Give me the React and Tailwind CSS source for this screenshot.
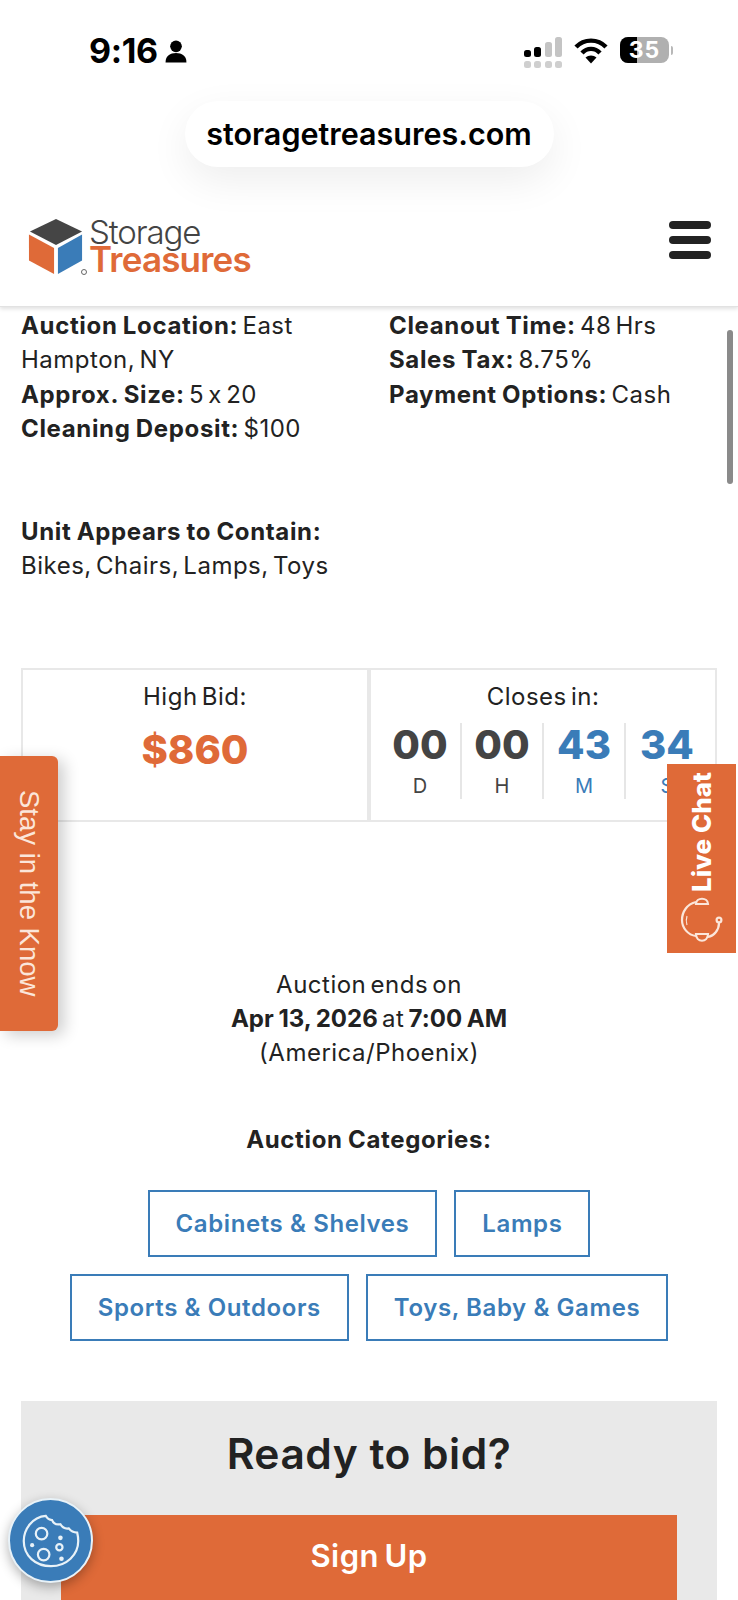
import React from 'react';

const font = { fontFamily: 'Inter, "Noto Sans", sans-serif', fontFeatureSettings: '"calt" 0' };

function SignalIcon() {
  return (
    <svg width="38" height="31" viewBox="0 0 38 31">
      <rect x="0" y="13" width="7" height="7" rx="2.5" fill="#000" />
      <rect x="10" y="10" width="7" height="10" rx="2.5" fill="#000" />
      <rect x="21" y="5" width="7" height="15" rx="2.5" fill="#c4c4c4" />
      <rect x="31" y="0" width="7" height="20" rx="2.5" fill="#c4c4c4" />
      <rect x="0" y="24" width="7" height="7" rx="2.5" fill="#cfcfcf" />
      <rect x="10" y="24" width="7" height="7" rx="2.5" fill="#cfcfcf" />
      <rect x="21" y="24" width="7" height="7" rx="2.5" fill="#cfcfcf" />
      <rect x="31" y="24" width="7" height="7" rx="2.5" fill="#cfcfcf" />
    </svg>
  );
}

function WifiIcon() {
  return (
    <svg width="34" height="27" viewBox="0 0 34 27" fill="none" stroke="#000" strokeWidth="4.4">
      <path d="M2 10 C10 1.5 24 1.5 32 10" />
      <path d="M8 16 C13 10.5 21 10.5 26 16" />
      <path d="M17 26.5 L11.5 20.5 C14.5 17.8 19.5 17.8 22.5 20.5 Z" fill="#000" stroke="none" />
    </svg>
  );
}

function Battery() {
  return (
    <div className="flex items-center gap-[2px]">
      <div className="relative w-[49px] h-[26px] rounded-[8px] overflow-hidden bg-[#b0b0b0]">
        <div className="h-full w-[17px] bg-black" />
        <span className="absolute inset-0 flex items-center justify-center text-white text-[23px] font-bold tracking-[1px]">35</span>
      </div>
      <div className="w-[2px] h-[9px] rounded-r bg-[#b8b8b8]" />
    </div>
  );
}

function Logo() {
  return (
    <div className="flex items-start">
      <svg width="56" height="56" viewBox="0 0 58 58">
        <path d="M29 0 L56 13 L29 27 L2 13 Z" fill="#454545" />
        <path d="M1 16 L27 30 L27 57 L1 43 Z" fill="#df6a38" />
        <path d="M31 30 L56 16 L56 43 L31 57 Z" fill="#3a7cb8" />
      </svg>
      <span className="mt-[50px] -ml-[3px] w-[6px] h-[6px] rounded-full border border-[#666]" />
      <div className="ml-[2px] flex flex-col">
        <span className="text-[33px] leading-[26px] font-light tracking-[-1.1px] text-[#444]">Storage</span>
        <span className="text-[35px] leading-[29px] font-semibold tracking-[-0.8px] text-[#df6a38]">Treasures</span>
      </div>
    </div>
  );
}

function Count({ value, label, blue, last }) {
  return (
    <div className={`w-[82px] h-[76px] flex flex-col items-center tracking-normal ${last ? '' : 'border-r-2 border-[#e6e6e6]'} ${blue ? 'text-[#3a7cb8]' : 'text-[#444]'}`}>
      <span className="text-[40px] leading-[46px] font-extrabold -mt-[1px]">{value}</span>
      <span className="text-[20px] leading-[30px] font-normal mt-[3px]">{label}</span>
    </div>
  );
}

function Chip({ children }) {
  return (
    <div className="h-[67px] px-[26px] pt-[1px] flex items-center border-2 border-[#3a7cb8] text-[#3a7cb8] text-[24px] font-semibold tracking-[0.6px] [word-spacing:0px]">
      {children}
    </div>
  );
}

function Bold({ children }) {
  return <b className="font-bold tracking-[0.65px] [word-spacing:-1px]">{children}</b>;
}

function CookieIcon() {
  return (
    <svg width="88" height="88" viewBox="-2 -4 84 84" fill="none" stroke="#e8f2f8" strokeWidth="2.1" className="shrink-0">
      <path d="M35 14 C22 15 14 27 14 38 C14 52 25 62 40 62 C55 62 66 51 66 38 C66 35 65.5 32 65 30 Q60 30 57 26 Q52 27 49 22 Q43 23 41 18 Q37 18 35 14 Z" />
      <circle cx="31" cy="31" r="5.5" />
      <circle cx="33" cy="51" r="5.5" />
      <circle cx="48" cy="44" r="3" />
      <circle cx="22" cy="42" r="2" fill="#e8f2f8" stroke="none" />
      <circle cx="49" cy="35" r="2.2" fill="#e8f2f8" stroke="none" />
      <circle cx="50" cy="55" r="2.2" fill="#e8f2f8" stroke="none" />
    </svg>
  );
}

function HeadsetIcon() {
  return (
    <svg width="64" height="64" viewBox="0 0 64 64" fill="none" stroke="#fbe6da" strokeWidth="2.2">
      <path d="M26 14 C26 7 38 7 38 14 Z" />
      <path d="M26 12 C17 14 12 22 12 30 C12 38 18 45 26 46" />
      <path d="M26 44 L38 44 C38 53 26 53 26 44 Z" />
      <path d="M38 47 C44 46 49 40 49 33" />
      <circle cx="49" cy="30" r="2.4" />
      <path d="M17 26 C16 29 16 32 17 35" strokeWidth="1.2" />
    </svg>
  );
}

export default function App() {
  return (
    <div className="relative w-[738px] h-[1600px] overflow-hidden bg-white text-[#222]" style={font}>
      {/* phone chrome and site header */}
      <header className="h-[307px] bg-white border-b border-[#e2e2e2] shadow-[0_2px_4px_rgba(0,0,0,0.12)] relative z-10">
        <div className="h-[101px] flex justify-between pl-[89px] pr-[65px] pt-[31px]">
          <div className="flex items-start gap-[7px]">
            <span className="text-[34px] leading-[40px] font-bold text-black tracking-[-0.4px]">9:16</span>
            <svg width="22" height="23" viewBox="0 0 21 22" className="mt-[9px]">
              <circle cx="10.5" cy="6" r="5.6" fill="#000" />
              <path d="M0.5 21.5 C0.5 15 5 12.5 10.5 12.5 C16 12.5 20.5 15 20.5 21.5 Z" fill="#000" />
            </svg>
          </div>
          <div className="flex items-start gap-[12px] pt-[6px]">
            <SignalIcon />
            <WifiIcon />
            <Battery />
          </div>
        </div>
        <div className="flex justify-center">
          <div className="w-[369px] h-[66px] rounded-[33px] bg-white shadow-[0_14px_40px_rgba(0,0,0,0.07)] flex items-center justify-center text-[30.5px] font-semibold text-black">
            storagetreasures.com
          </div>
        </div>
        <div className="flex items-start justify-between pl-[28px] pr-[27px] pt-[52px]">
          <Logo />
          <div className="flex flex-col gap-[7px] pt-[2px]">
            <div className="w-[42px] h-[8px] rounded-full bg-[#222]" />
            <div className="w-[42px] h-[8px] rounded-full bg-[#222]" />
            <div className="w-[42px] h-[8px] rounded-full bg-[#222]" />
          </div>
        </div>
      </header>

      <main className="px-[21px] pt-[2px] tracking-[0.5px] [word-spacing:-3px]">
        <section className="grid grid-cols-[368px_1fr] text-[24px] leading-[34.3px]">
          <div>
            <p className="pr-[40px]"><Bold>Auction Location:</Bold> East Hampton, NY</p>
            <p><Bold>Approx. Size:</Bold> 5 x 20</p>
            <p><Bold>Cleaning Deposit:</Bold> $100</p>
          </div>
          <div>
            <p><Bold>Cleanout Time:</Bold> 48 Hrs</p>
            <p><Bold>Sales Tax:</Bold> 8.75%</p>
            <p><Bold>Payment Options:</Bold> Cash</p>
          </div>
        </section>

        <section className="mt-[69px] text-[24px] leading-[34.3px]">
          <p><Bold>Unit Appears to Contain:</Bold></p>
          <p>Bikes, Chairs, Lamps, Toys</p>
        </section>

        <section className="mt-[84px] h-[154px] flex">
          <div className="w-[348px] border-2 border-[#e8e8e8] flex flex-col items-center pt-[10px]">
            <span className="text-[24px] leading-[34px]">High Bid:</span>
            <span className="text-[40px] leading-[50px] font-extrabold tracking-normal text-[#df6a38] mt-[11px]">$860</span>
          </div>
          <div className="flex-1 border-2 border-[#e8e8e8] flex flex-col pt-[10px]">
            <span className="text-[24px] leading-[34px] text-center">Closes in:</span>
            <div className="flex pl-[9px] mt-[9px]">
              <Count value="00" label="D" />
              <Count value="00" label="H" />
              <Count value="43" label="M" blue />
              <Count value="34" label="S" blue last />
            </div>
          </div>
        </section>

        <section className="mt-[146px] text-center text-[24px] leading-[34.3px]">
          <p>Auction ends on</p>
          <p>
            <b className="font-bold tracking-normal [word-spacing:-1px]">Apr 13, 2026</b> at <b className="font-bold tracking-normal [word-spacing:-1px]">7:00 AM</b>
          </p>
          <p>(America/Phoenix)</p>
        </section>

        <p className="mt-[52px] text-center text-[24px] leading-[34.3px]"><Bold>Auction Categories:</Bold></p>

        <section className="mt-[33px] flex flex-col items-center gap-[17px]">
          <div className="flex gap-[17px]">
            <Chip>Cabinets &amp; Shelves</Chip>
            <Chip>Lamps</Chip>
          </div>
          <div className="flex gap-[17px]">
            <Chip>Sports &amp; Outdoors</Chip>
            <Chip>Toys, Baby &amp; Games</Chip>
          </div>
        </section>

        <section className="mt-[60px] h-[300px] bg-[#e9e9e9] px-[40px] pt-[28px] flex flex-col items-center">
          <h2 className="text-[42.5px] leading-[50px] font-semibold [word-spacing:0px]">Ready to bid?</h2>
          <div className="mt-[36px] w-full h-[90px] bg-[#df6a38] text-white text-[31px] font-semibold flex items-center justify-center pb-[8px]">
            Sign Up
          </div>
        </section>
      </main>

      {/* scrollbar */}
      <div className="absolute left-[727px] top-[330px] w-[6px] h-[154px] rounded-full bg-[#8a8a8a]" />

      {/* floating tabs */}
      <div
        className="absolute left-0 top-[756px] w-[58px] h-[275px] rounded-r-[6px] bg-[#df6a38] text-[#fbe6da] shadow-[6px_4px_16px_rgba(0,0,0,0.2)] flex items-center justify-center text-[27.5px] [writing-mode:vertical-rl]"
        style={{ fontFamily: '"Liberation Sans", sans-serif' }}
      >
        Stay in the Know
      </div>
      <div className="absolute left-[667px] top-[764px] w-[69px] h-[189px] bg-[#df6a38] flex flex-col items-center">
        <span className="mt-[8px] text-white text-[26px] leading-[30px] font-extrabold [writing-mode:vertical-rl] rotate-180">Live Chat</span>
        <div className="absolute left-[3px] top-[126px]"><HeadsetIcon /></div>
      </div>
      <div className="absolute left-[8px] top-[1498px] w-[85px] h-[85px] rounded-full bg-[#3a7cb8] border-2 border-[#e8f2f8] shadow-[0_4px_12px_rgba(0,0,0,0.3)] flex items-center justify-center">
        <CookieIcon />
      </div>
    </div>
  );
}
